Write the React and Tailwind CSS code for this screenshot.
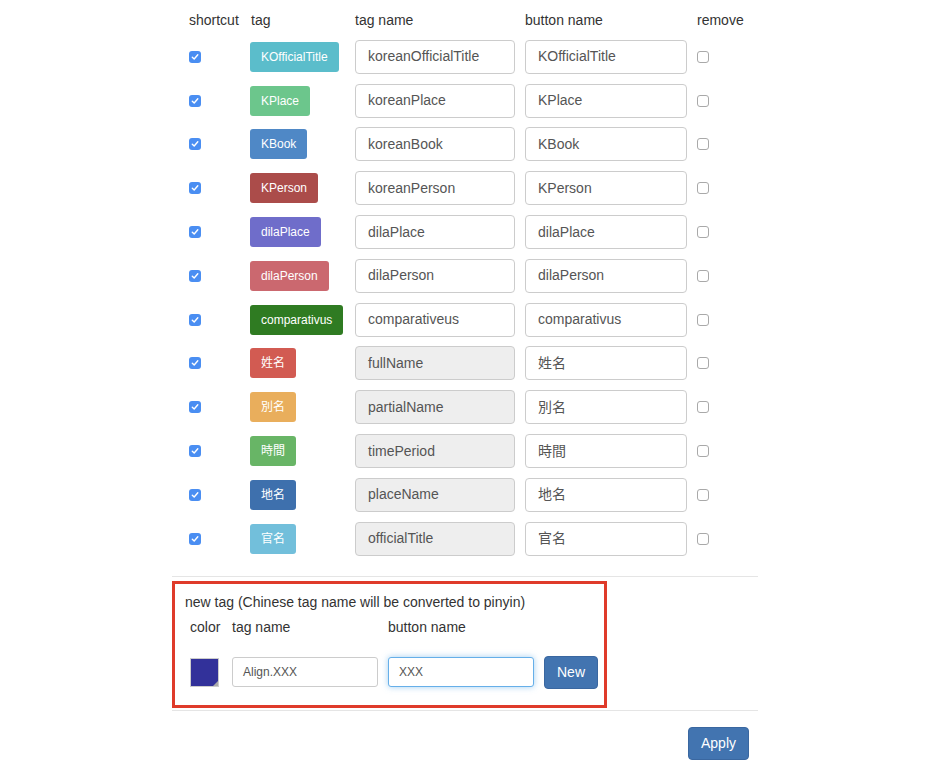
import React from "react";

const rows = [
  { tag: "KOfficialTitle", color: "bg-[#5bbdcb]", name: "koreanOfficialTitle", btn: "KOfficialTitle", dis: false },
  { tag: "KPlace", color: "bg-[#6cc68c]", name: "koreanPlace", btn: "KPlace", dis: false },
  { tag: "KBook", color: "bg-[#4f88c6]", name: "koreanBook", btn: "KBook", dis: false },
  { tag: "KPerson", color: "bg-[#ab4c4a]", name: "koreanPerson", btn: "KPerson", dis: false },
  { tag: "dilaPlace", color: "bg-[#6f6dca]", name: "dilaPlace", btn: "dilaPlace", dis: false },
  { tag: "dilaPerson", color: "bg-[#cb686f]", name: "dilaPerson", btn: "dilaPerson", dis: false },
  { tag: "comparativus", color: "bg-[#2f7b22]", name: "comparativeus", btn: "comparativus", dis: false },
  { tag: "姓名", color: "bg-[#d25b52]", name: "fullName", btn: "姓名", dis: true },
  { tag: "別名", color: "bg-[#e9ae5c]", name: "partialName", btn: "別名", dis: true },
  { tag: "時間", color: "bg-[#68b566]", name: "timePeriod", btn: "時間", dis: true },
  { tag: "地名", color: "bg-[#3e70ad]", name: "placeName", btn: "地名", dis: true },
  { tag: "官名", color: "bg-[#72bfdb]", name: "officialTitle", btn: "官名", dis: true },
];

function Checked() {
  return (
    <div className="w-[12px] h-[12px] rounded-[3px] bg-[#4a8ef2] flex items-center justify-center">
      <svg width="8" height="8" viewBox="0 0 8 8">
        <path d="M1.3 4.2 L3.2 6 L6.8 1.8" fill="none" stroke="white" strokeWidth="1.4" strokeLinecap="round" strokeLinejoin="round" />
      </svg>
    </div>
  );
}

function Unchecked() {
  return <div className="w-[12px] h-[12px] rounded-[3px] border border-[#a9a9a9] bg-white" />;
}

export default function App() {
  return (
    <div className="w-[934px] h-[768px] bg-white text-[#333] text-[14px] overflow-hidden" style={{ fontFamily: '"Liberation Sans", "Noto Sans CJK SC", Arial, sans-serif' }}>
      <div className="ml-[172px] w-[586px]">
        <div className="pl-[17px] pt-[10px]">
          <div className="flex h-[20px] items-center">
            <div className="w-[62px]">shortcut</div>
            <div className="w-[104px]">tag</div>
            <div className="w-[170px]">tag name</div>
            <div className="w-[172px]">button name</div>
            <div>remove</div>
          </div>
          <div className="mt-[5px]">
            {rows.map((r) => (
              <div key={r.tag} className="flex items-center h-[43.8px]">
                <div className="w-[61px]"><Checked /></div>
                <div className="w-[105px]">
                  <span className={`inline-flex items-center h-[30px] px-[11px] rounded-[3px] text-white text-[12px] ${r.color}`}>{r.tag}</span>
                </div>
                <div className="w-[170px]">
                  <div className={`w-[160px] h-[34px] border border-[#ccc] rounded-[4px] flex items-center pl-[12px] text-[#555] ${r.dis ? "bg-[#eee]" : "bg-white"}`}>{r.name}</div>
                </div>
                <div className="w-[172px]">
                  <div className="w-[162px] h-[34px] border border-[#ccc] rounded-[4px] flex items-center pl-[12px] text-[#555] bg-white">{r.btn}</div>
                </div>
                <div><Unchecked /></div>
              </div>
            ))}
          </div>
        </div>
        <div className="mt-[15px] border-t border-[#e5e5e5]" />
        <div className="mt-[4px] w-[435px] h-[127px] border-[3px] border-[#df3b2a] pl-[10px] pt-[10px]">
          <div className="leading-[16px] text-[14px]">new tag (Chinese tag name will be converted to pinyin)</div>
          <div className="flex mt-[9px] leading-[16px] text-[14px]">
            <div className="w-[47px] pl-[5px]">color</div>
            <div className="w-[156px]">tag name</div>
            <div>button name</div>
          </div>
          <div className="flex items-center mt-[21px] pl-[5px]">
            <div className="relative w-[29px] h-[29px] bg-[#32319a] border border-[#ccc]">
              <svg className="absolute right-0 bottom-0" width="5" height="5" viewBox="0 0 5 5">
                <path d="M5 0 L5 5 L0 5 Z" fill="#aaa" />
              </svg>
            </div>
            <div className="ml-[13px] w-[146px] h-[30px] border border-[#ccc] rounded-[3px] flex items-center pl-[10px] text-[12px] text-[#555] bg-white">Align.XXX</div>
            <div className="ml-[10px] w-[146px] h-[30px] border border-[#66afe9] rounded-[3px] flex items-center pl-[10px] text-[12px] text-[#555] bg-white shadow-[0_0_6px_rgba(102,175,233,0.6)]">XXX</div>
            <div className="ml-[10px] w-[54px] h-[33px] rounded-[4px] bg-[#4274b0] border border-[#3a67a0] text-white flex items-center justify-center text-[14px]">New</div>
          </div>
        </div>
        <div className="mt-[2px] border-t border-[#e5e5e5]" />
        <div className="flex justify-end pr-[9px] mt-[16px]">
          <div className="w-[61px] h-[33px] rounded-[4px] bg-[#4274b0] border border-[#3a67a0] text-white flex items-center justify-center text-[14px]">Apply</div>
        </div>
      </div>
    </div>
  );
}
